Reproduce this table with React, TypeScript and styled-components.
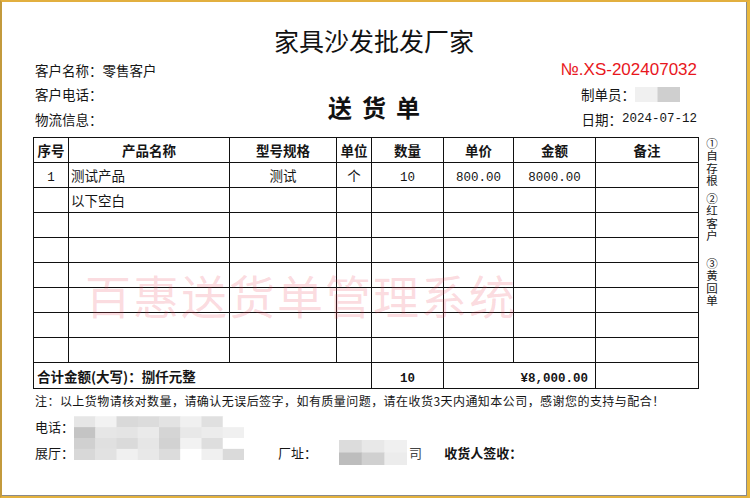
import React from "react";
import styled, { createGlobalStyle } from "styled-components";

const CJK = `"Noto Sans CJK SC", "Noto Sans", sans-serif`;
const MONO = `"Liberation Mono", "Noto Sans CJK SC", monospace`;

const GlobalStyle = createGlobalStyle`
  html, body { margin: 0; padding: 0; background: #fff; }
  body { font-family: ${CJK}; color: #111; }
`;

const Frame = styled.div`
  width: 750px;
  height: 498px;
  box-sizing: border-box;
  border-style: solid;
  border-width: 2px 3px 2px 2px;
  border-color: #e2af3f #e9b83c #e4b23e #c39a3c;
  background: #fff;
`;

const Sheet = styled.div`
  height: 100%;
  box-sizing: border-box;
  border-right: 1px solid #8a8a8a;
  border-bottom: 1px solid #8a8a8a;
  display: flex;
  flex-direction: column;
`;

const Title = styled.h1`
  margin: 23px 0 0;
  font: 400 25px/30px ${CJK};
  text-align: center;
  color: #111;
`;

const InfoBar = styled.div`
  display: grid;
  grid-template-columns: 1fr auto 1fr;
  margin-top: 2.5px;
`;

const InfoCol = styled.div<{ $side: "left" | "right" }>`
  display: flex;
  flex-direction: column;
  align-items: ${(p) => (p.$side === "left" ? "flex-start" : "flex-end")};
  padding-left: ${(p) => (p.$side === "left" ? "33px" : "0")};
  padding-right: ${(p) => (p.$side === "right" ? "49px" : "0")};
`;

const InfoLine = styled.div<{ $shift?: number }>`
  display: flex;
  align-items: center;
  height: 24.5px;
  font-size: 13.5px;
  color: #151515;
  white-space: nowrap;
  margin-right: ${(p) => p.$shift ?? 0}px;
`;

const DocName = styled.div`
  align-self: end;
  margin-bottom: 9px;
  padding-left: 10px;
  font: 700 24px/30px ${CJK};
  letter-spacing: 10px;
  color: #111;
`;

const OrderNo = styled.div`
  height: 24.5px;
  font: 400 17px/24.5px "Liberation Sans", Arial, sans-serif;
  color: #e8161c;
`;

const Digits = styled.span<{ $bold?: boolean }>`
  font-family: ${MONO};
  font-size: 12.5px;
  font-weight: ${(p) => (p.$bold ? 700 : 400)};
`;

const Main = styled.div`
  display: flex;
  align-items: flex-start;
  margin-top: 6px;
`;

const TableWrap = styled.div`
  position: relative;
  margin-left: 31px;
`;

const Table = styled.table`
  border-collapse: collapse;
  table-layout: fixed;
  width: 665px;
  font-family: ${CJK};
  font-size: 13.5px;
  color: #151515;
`;

const Row = styled.tr<{ $h?: number }>`
  height: ${(p) => p.$h ?? 25}px;
`;

const HeadCell = styled.th`
  border: 1px solid #111;
  padding: 0;
  font-weight: 700;
  text-align: center;
`;

const Cell = styled.td<{ $align?: "left" | "center" | "right"; $bold?: boolean; $pad?: number }>`
  border: 1px solid #111;
  padding: 0 ${(p) => p.$pad ?? 2}px;
  text-align: ${(p) => p.$align ?? "center"};
  font-weight: ${(p) => (p.$bold ? 700 : 400)};
  color: #151515;
  white-space: nowrap;
  overflow: hidden;
`;

const Watermark = styled.div`
  position: absolute;
  left: 52px;
  top: 134px;
  font: 400 46px/1 ${CJK};
  letter-spacing: 2px;
  color: rgba(238, 70, 90, 0.2);
  white-space: nowrap;
  pointer-events: none;
`;

const Side = styled.div`
  display: flex;
  flex-direction: column;
  align-items: center;
  margin-left: 6px;
`;

const Copy = styled.div<{ $top: number }>`
  writing-mode: vertical-rl;
  text-orientation: upright;
  margin-top: ${(p) => p.$top}px;
  font-size: 11.5px;
  line-height: 14px;
  letter-spacing: 0.8px;
  color: #151515;
  white-space: nowrap;
`;

const Note = styled.div`
  margin-top: 4px;
  padding-left: 33px;
  font-size: 12px;
  line-height: 16px;
  letter-spacing: 0.45px;
  color: #151515;
  white-space: nowrap;
`;

const Contacts = styled.div`
  display: grid;
  grid-template-columns: 39px 170px auto;
  grid-template-rows: 26px 26px;
  margin-top: 4px;
  padding-left: 33px;
  font-size: 13px;
  color: #151515;
  white-space: nowrap;
`;

const Label = styled.div<{ $row: number }>`
  grid-column: 1;
  grid-row: ${(p) => p.$row};
  display: flex;
  align-items: center;
`;

const PhoneBlur = styled.div`
  grid-column: 2;
  grid-row: 1 / span 2;
  align-self: start;
  margin-top: 3px;
  display: flex;
`;

const Factory = styled.div`
  grid-column: 3;
  grid-row: 2;
  display: flex;
  align-items: center;
  margin-left: 34px;
`;

const Gap = styled.span<{ $w: number }>`
  display: inline-block;
  width: ${(p) => p.$w}px;
`;

const Faint = styled.span`
  color: #444;
`;

const Sign = styled.span`
  font-weight: 700;
`;

type MosaicProps = { cells: string[][]; w: number; h: number };

const Mosaic = ({ cells, w, h }: MosaicProps) => {
  const rows = cells.length;
  const cols = cells[0].length;
  return (
    <svg width={cols * w} height={rows * h} viewBox={`0 0 ${cols * w} ${rows * h}`} style={{ display: "block" }}>
      {cells.map((r, ri) =>
        r.map((c, ci) => <rect key={`${ri}-${ci}`} x={ci * w} y={ri * h} width={w + 0.5} height={h + 0.5} fill={c} />)
      )}
    </svg>
  );
};

const phoneCells = [
  ["#e6e6e6", "#f2f2f2", "#d9d9d9", "#dcdcdc", "#e3e3e3", "#f0f0f0", "#e0e0e0", "#ffffff"],
  ["#c4c4c4", "#e6e6e6", "#e4e4e4", "#eaeaea", "#d5d5d5", "#e8e8e8", "#ececec", "#f0f0f0"],
  ["#d0d0d0", "#e0e0e0", "#dadada", "#e6e6e6", "#d2d2d2", "#f2f2f2", "#dedede", "#ffffff"],
  ["#d8d8d8", "#e2e2e2", "#f0f0f0", "#e8e8e8", "#dcdcdc", "#ffffff", "#f0f0f0", "#dadada"],
];

const factoryCells = [
  ["#dcdcdc", "#e8e8e8", "#f0f0f0"],
  ["#bdbdbd", "#d0d0d0", "#ececec"],
];

const makerCells = [["#f0f0f0", "#f0f0f0", "#cfcfcf", "#cfcfcf"]];

const headers = ["序号", "产品名称", "型号规格", "单位", "数量", "单价", "金额", "备注"];
const widths = [35, 161, 107, 35, 72, 70, 82, 103];

const copies = [
  { top: 1, text: "①自存根" },
  { top: 6, text: "②红客户" },
  { top: 16, text: "③黄回单" },
];

export default function App() {
  const emptyRows = Array.from({ length: 6 });
  return (
    <>
      <GlobalStyle />
      <Frame>
        <Sheet>
          <Title>家具沙发批发厂家</Title>
          <InfoBar>
            <InfoCol $side="left">
              <InfoLine>客户名称：零售客户</InfoLine>
              <InfoLine>客户电话：</InfoLine>
              <InfoLine>物流信息：</InfoLine>
            </InfoCol>
            <DocName>送货单</DocName>
            <InfoCol $side="right">
              <OrderNo>№.XS-202407032</OrderNo>
              <InfoLine $shift={17}>
                制单员：
                <Mosaic cells={makerCells} w={11.25} h={15} />
              </InfoLine>
              <InfoLine>
                日期：<Digits>2024-07-12</Digits>
              </InfoLine>
            </InfoCol>
          </InfoBar>

          <Main>
            <TableWrap>
              <Table>
                <colgroup>
                  {widths.map((w, i) => (
                    <col key={i} style={{ width: w }} />
                  ))}
                </colgroup>
                <thead>
                  <Row>
                    {headers.map((h) => (
                      <HeadCell key={h}>{h}</HeadCell>
                    ))}
                  </Row>
                </thead>
                <tbody>
                  <Row>
                    <Cell><Digits>1</Digits></Cell>
                    <Cell $align="left">测试产品</Cell>
                    <Cell>测试</Cell>
                    <Cell>个</Cell>
                    <Cell><Digits>10</Digits></Cell>
                    <Cell><Digits>800.00</Digits></Cell>
                    <Cell><Digits>8000.00</Digits></Cell>
                    <Cell />
                  </Row>
                  <Row>
                    <Cell />
                    <Cell $align="left">以下空白</Cell>
                    <Cell />
                    <Cell />
                    <Cell />
                    <Cell />
                    <Cell />
                    <Cell />
                  </Row>
                  {emptyRows.map((_, i) => (
                    <Row key={i}>
                      {widths.map((_, j) => (
                        <Cell key={j} />
                      ))}
                    </Row>
                  ))}
                  <Row $h={26}>
                    <Cell colSpan={4} $align="left" $bold $pad={3}>合计金额(大写)：捌仟元整</Cell>
                    <Cell $bold><Digits $bold>10</Digits></Cell>
                    <Cell colSpan={2} $align="right" $pad={7}><Digits $bold>¥8,000.00</Digits></Cell>
                    <Cell />
                  </Row>
                </tbody>
              </Table>
              <Watermark>百惠送货单管理系统</Watermark>
            </TableWrap>
            <Side>
              {copies.map((c) => (
                <Copy key={c.text} $top={c.top}>
                  {c.text}
                </Copy>
              ))}
            </Side>
          </Main>

          <Note>注：以上货物请核对数量，请确认无误后签字，如有质量问题，请在收货3天内通知本公司，感谢您的支持与配合！</Note>

          <Contacts>
            <Label $row={1}>电话：</Label>
            <Label $row={2}>展厅：</Label>
            <PhoneBlur>
              <Mosaic cells={phoneCells} w={21.5} h={11} />
            </PhoneBlur>
            <Factory>
              厂址：
              <Gap $w={22} />
              <Mosaic cells={factoryCells} w={22.7} h={12.5} />
              <Gap $w={2} />
              <Faint>司</Faint>
              <Gap $w={22} />
              <Sign>收货人签收：</Sign>
            </Factory>
          </Contacts>
        </Sheet>
      </Frame>
    </>
  );
}
